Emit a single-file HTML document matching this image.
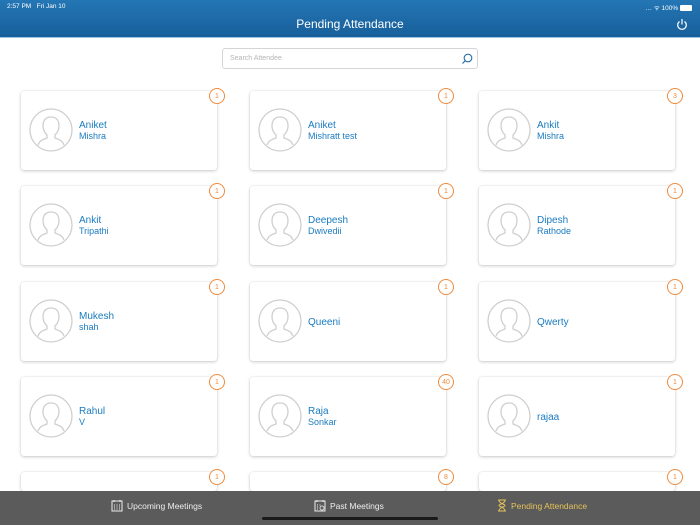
<!DOCTYPE html>
<html style="width:700px;height:525px;overflow:hidden"><head><style>
*{margin:0;padding:0;box-sizing:border-box}
body{width:700px;height:525px;overflow:hidden;background:#fff;font-family:"Liberation Sans",sans-serif;position:relative}
.hdr{position:absolute;left:0;top:0;width:700px;height:38px;background:linear-gradient(#2476b5,#175f9a);border-bottom:1px solid #9fc3e0}
.st{position:absolute;top:3px;font-size:6.5px;color:#fff}
.title{position:absolute;top:17px;width:100%;text-align:center;color:#fff;font-size:12px}
.search{position:absolute;left:222px;top:48px;width:256px;height:21px;border:1px solid #d5d5d5;border-radius:3px;font-size:7px;color:#b5b5b5;padding:6px 7px}
.card{position:absolute;width:196px;height:79px;background:#fff;border-radius:3px;box-shadow:0 1px 3px rgba(0,0,0,.2),0 0 1px rgba(0,0,0,.15)}
.av{position:absolute;left:8px;top:17px}
.nm{position:absolute;left:58px;color:#1a7bc0;font-size:10px;line-height:11px}
.b{position:absolute;right:-8px;top:-3px;width:16px;height:16px;border:1px solid #f08a3c;border-radius:50%;background:#fff;color:#f08a3c;font-size:7px;display:flex;align-items:center;justify-content:center}
.tab{position:absolute;left:0;top:491px;width:700px;height:34px;background:#5a5b5a;z-index:5}
.ti{position:absolute;top:8px;font-size:8.5px;color:#eee;display:flex;align-items:center;gap:4px}
.bar{position:absolute;left:262px;top:517px;width:176px;height:3px;border-radius:2px;background:#1a1a1a;z-index:6}
</style></head><body>
<div class="hdr">
<div class="st" style="left:7px">2:57 PM&nbsp;&nbsp; Fri Jan 10</div>
<div class="st" style="right:8px">&#8230; ᯤ 100% <span style="display:inline-block;width:12px;height:6px;background:#fff;border-radius:1px;vertical-align:-1px"></span></div>
<div class="title">Pending Attendance</div>
<svg style="position:absolute;left:676px;top:18px" width="12" height="13" viewBox="0 0 12 13"><path d="M3.5 3.5A4.3 4.3 0 1 0 8.5 3.5" fill="none" stroke="#fff" stroke-width="1.2"/><path d="M6 1v5.5" stroke="#fff" stroke-width="1.2"/></svg>
</div>
<div class="search">Search Attendee
<svg style="position:absolute;right:4px;top:4px" width="12" height="12" viewBox="0 0 12 12"><circle cx="7" cy="5" r="3.8" fill="none" stroke="#2a6fa8" stroke-width="1.1"/><path d="M4.3 7.7L1.5 10.5" stroke="#2a6fa8" stroke-width="1.2"/></svg></div>

<div id="g"></div>
<script>
var d=[["Aniket","Mishra",1],["Aniket","Mishratt test",1],["Ankit","Mishra",3],["Ankit","Tripathi",1],["Deepesh","Dwivedii",1],["Dipesh","Rathode",1],["Mukesh","shah",1],["Queeni","",1],["Qwerty","",1],["Rahul","V",1],["Raja","Sonkar",40],["rajaa","",1],["","",1],["","",8],["","",1]];
var xs=[21,250,479],ys=[91,186,282,377,472],h="";
var av='<svg class="av" width="44" height="44" viewBox="0 0 44 44"><circle cx="22" cy="22" r="21" fill="none" stroke="#cfcfcf" stroke-width="1.3"/><path d="M9 37c2-5 6-6 9-7v-3c-2-2-4-5-4-9 0-6 3-9 8-9s8 3 8 9c0 4-2 7-4 9v3c3 1 7 2 9 7" fill="none" stroke="#cfcfcf" stroke-width="1.3"/></svg>';
d.forEach(function(c,i){var x=xs[i%3],y=ys[Math.floor(i/3)];
var t=c[1]?'<div class="nm" style="top:29px">'+c[0]+'<br><span style="font-size:9px">'+c[1]+'</span></div>':'<div class="nm" style="top:35px">'+c[0]+'</div>';
h+='<div class="card" style="left:'+x+'px;top:'+y+'px;'+(i>=12?'height:19px':'')+'">'+(c[0]?av+t:'')+'<div class="b">'+c[2]+'</div></div>';});
document.getElementById('g').innerHTML=h;
</script>
<div class="tab">
<div class="ti" style="left:111px"><svg width="12" height="13" viewBox="0 0 12 13"><rect x="1" y="2" width="10" height="10" fill="none" stroke="#eee"/><path d="M3 1v2M9 1v2M3 6h1M5.5 6h1M8 6h1M3 8h1M5.5 8h1M8 8h1M3 10h1M5.5 10h1M8 10h1" stroke="#eee"/></svg>Upcoming Meetings</div>
<div class="ti" style="left:314px"><svg width="12" height="13" viewBox="0 0 12 13"><rect x="1" y="2" width="10" height="10" fill="none" stroke="#eee"/><path d="M3 1v2M9 1v2M3 6h1M5.5 6h1M3 8h1M3 10h1" stroke="#eee"/><circle cx="8" cy="9" r="2" fill="none" stroke="#eee" stroke-width=".8"/></svg>Past Meetings</div>
<div class="ti" style="left:497px;color:#e8c25a"><svg width="10" height="13" viewBox="0 0 10 13"><path d="M1 1h8M1 12h8M2 1c0 4 6 4 6 5.5S2 8 2 12M8 1c0 4-6 4-6 5.5S8 8 8 12" fill="none" stroke="#e8c25a"/></svg>Pending Attendance</div>
</div>
<div class="bar"></div>
</body></html>
